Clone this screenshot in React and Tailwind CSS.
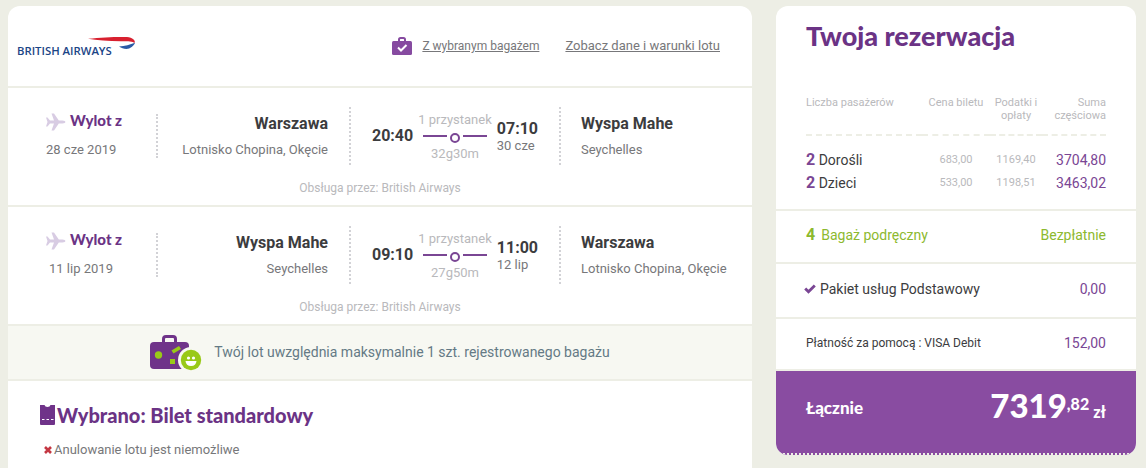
import React from "react";

const flights = [
  {
    date: "28 cze 2019",
    from: "Warszawa",
    fromAirport: "Lotnisko Chopina, Okęcie",
    departs: "20:40",
    duration: "32g30m",
    arrives: "07:10",
    arrivalDate: "30 cze",
    to: "Wyspa Mahe",
    toAirport: "Seychelles",
  },
  {
    date: "11 lip 2019",
    from: "Wyspa Mahe",
    fromAirport: "Seychelles",
    departs: "09:10",
    duration: "27g50m",
    arrives: "11:00",
    arrivalDate: "12 lip",
    to: "Warszawa",
    toAirport: "Lotnisko Chopina, Okęcie",
  },
];

const passengers = [
  { count: 2, label: "Dorośli", price: "683,00", tax: "1169,40", total: "3704,80" },
  { count: 2, label: "Dzieci", price: "533,00", tax: "1198,51", total: "3463,02" },
];

function AirlineLogo() {
  return (
    <svg width="120" height="22" viewBox="0 0 120 22" role="img" aria-label="British Airways">
      <text x="0" y="20" fontSize="11.3" fontWeight="600" fill="#1b4586" fontFamily="'Open Sans', sans-serif">
        BRITISH AIRWAYS
      </text>
      <path d="M71 3.800 C85 2.200 101 1.700 110 2 C115.500 2.500 119 5.500 117.500 8 C115.500 6.200 112 6.200 104 6.200 C91 6.200 80 5.500 71 3.800Z" fill="#d8202f" />
      <path d="M102 11.500 C108 11 113 9.800 118 7.800 C117 11 113 14 109.500 14 C106.500 14 104.500 13 102 11.500Z" fill="#2c5aa5" />
    </svg>
  );
}

function BagCheckIcon() {
  return (
    <svg width="20" height="18" viewBox="0 0 20 18" aria-hidden="true">
      <path d="M7 5V2.500Q7 1 8.500 1H11.500Q13 1 13 2.500V5" fill="none" stroke="#864aa0" strokeWidth="2" />
      <rect y="4" width="20" height="14" rx="1.500" fill="#864aa0" />
      <path d="M6 10.500L9 13.500L14.500 8" fill="none" stroke="#fff" strokeWidth="2" />
    </svg>
  );
}

function PlaneIcon() {
  return (
    <svg width="20" height="18" viewBox="0 0 20 18" aria-hidden="true" className="shrink-0">
      <path
        d="M0 4.500H1.500L4 7.500H8L5.500 .5H8L12.800 7.500H16.500Q19.500 7.800 19.500 9T16.500 10.500H12.800L8 17.500H5.500L8 10.500H4L1.500 13.500H0L1.500 9Z"
        fill="#d8cce3"
      />
    </svg>
  );
}

function StopoverLine() {
  return (
    <svg width="64" height="18" viewBox="0 0 64 18" aria-hidden="true">
      <path d="M0 8H24M40 8H64" stroke="#7a4694" strokeWidth="2" />
      <circle cx="32" cy="10" r="4" fill="none" stroke="#7a4694" strokeWidth="2" />
    </svg>
  );
}

function SuitcaseIcon() {
  return (
    <svg width="52" height="36" viewBox="0 0 52 36" aria-hidden="true">
      <path d="M13.500 8V4Q13.500 1.500 16 1.500H23Q25.500 1.500 25.500 4V8" fill="none" stroke="#6f3389" strokeWidth="3" />
      <rect y="7" width="39" height="27" rx="4" fill="#6f3389" />
      <circle cx="8.500" cy="20" r="3.700" fill="#99c918" />
      <path d="M21.500 15.500L29 11L31 14L23.500 18.500Z" fill="#99c918" />
      <rect x="20" y="24" width="5" height="5" fill="#99c918" />
      <circle cx="41" cy="25" r="13" fill="#f7f8f2" />
      <circle cx="41" cy="25" r="10.200" fill="#99c918" />
      <circle cx="38.500" cy="23" r="1.600" fill="#fff" />
      <circle cx="43.500" cy="23" r="1.600" fill="#fff" />
      <path d="M35.500 26H46.500Q46 31 41 31T35.500 26Z" fill="#fff" />
    </svg>
  );
}

function TicketIcon() {
  return (
    <svg width="15" height="20" viewBox="0 0 15 20" aria-hidden="true">
      <path d="M0 0H4.500Q5 2 7.500 2T10.500 0H15V19Q15 20 14 20H1Q0 20 0 19Z" fill="#6f3389" />
      <path d="M2 14.500H14" stroke="#fff" strokeWidth="1" strokeDasharray="2.500 2" />
    </svg>
  );
}

function Flight({ flight }) {
  return (
    <section className="border-b-2 border-[#edeee5] pt-[19px] pb-[9px]">
      <div className="grid h-[58px] grid-cols-[150fr_193fr_210fr_191fr] items-center whitespace-nowrap">
        <div className="flex flex-col gap-3 border-r-2 border-dotted border-[#d2d2d6] pl-[38px]">
          <h3 className="flex h-4 items-center gap-1 font-['Lato'] text-[15px] leading-3 font-black text-[#6b3385]">
            <PlaneIcon />
            <span className="pb-1">Wylot z</span>
          </h3>
          <p className="w-[70px] text-center leading-4">{flight.date}</p>
        </div>
        <div className="flex h-full flex-col gap-2 border-r-2 border-dotted border-[#d2d2d6] pt-[7px] pr-[21px] text-right">
          <strong className="text-base leading-5 font-bold text-[#3c3c3e]">{flight.from}</strong>
          <span className="leading-4">{flight.fromAirport}</span>
        </div>
        <div className="flex h-full items-center justify-center gap-[5px] border-r-2 border-dotted border-[#d2d2d6]">
          <strong className="text-base leading-5 font-bold text-[#3c3c3e]">{flight.departs}</strong>
          <div className="flex flex-col items-center pt-0.5 text-[#b9b9bc]">
            <span className="leading-4">1 przystanek</span>
            <StopoverLine />
            <span className="leading-4">{flight.duration}</span>
          </div>
          <div className="flex flex-col pt-0.5">
            <strong className="text-base leading-[18px] font-bold text-[#3c3c3e]">{flight.arrives}</strong>
            <span className="leading-4">{flight.arrivalDate}</span>
          </div>
        </div>
        <div className="flex h-full flex-col gap-2 pt-[7px] pl-5">
          <strong className="text-base leading-5 font-bold text-[#3c3c3e]">{flight.to}</strong>
          <span className="leading-4">{flight.toAirport}</span>
        </div>
      </div>
      <p className="mt-[15px] text-center text-[12px] leading-4 text-[#b9b9bc]">Obsługa przez: British Airways</p>
    </section>
  );
}

export default function App() {
  return (
    <div className="flex min-h-screen items-start gap-6 bg-[#edeee5] pt-1.5 pr-2.5 pl-2 font-['Roboto'] text-[13px] text-[#77777a]">
      <main className="min-h-[calc(100vh-6px)] min-w-0 flex-1 rounded-t-xl bg-white">
        <header className="flex h-[82px] items-center justify-between border-b-2 border-[#edeee5] pr-8 pl-[9px]">
          <AirlineLogo />
          <nav className="flex items-center gap-[26px]">
            <a href="#bagaz" className="flex items-center gap-2.5 text-xs underline">
              <BagCheckIcon />
              Z wybranym bagażem
            </a>
            <a href="#warunki" className="underline">
              Zobacz dane i warunki lotu
            </a>
          </nav>
        </header>

        {flights.map((flight) => (
          <Flight key={flight.date} flight={flight} />
        ))}

        <div className="flex h-[55px] items-center justify-center gap-3 border-b-2 border-[#edeee5] bg-[#f7f8f2] text-sm text-[#647a85]">
          <SuitcaseIcon />
          <p className="pb-0.5">Twój lot uwzględnia maksymalnie 1 szt. rejestrowanego bagażu</p>
        </div>

        <section className="px-8 pt-[22px]">
          <h2 className="flex items-center gap-0.5 font-['Lato'] text-xl leading-6 font-black text-[#6b3385]">
            <TicketIcon />
            Wybrano: Bilet standardowy
          </h2>
          <p className="mt-[15px] flex items-center gap-0.5 pl-1 leading-4">
            <svg width="8" height="8" viewBox="0 0 8 8" aria-hidden="true">
              <path d="M1 1L7 7M7 1L1 7" stroke="#c43742" strokeWidth="2.600" />
            </svg>
            Anulowanie lotu jest niemożliwe
          </p>
        </section>
      </main>

      <aside className="w-[360px] shrink-0 overflow-hidden rounded-xl bg-white">
        <section className="border-b-2 border-[#edeee5] px-[30px] pt-3.5 pb-[15px]">
          <h1 className="font-['Lato'] text-[27px] leading-8 font-black text-[#6b3385]">Twoja rezerwacja</h1>
          <table className="mt-11 w-full table-fixed border-collapse">
            <colgroup>
              <col className="w-[116px]" />
              <col className="w-[68px]" />
              <col className="w-[52px]" />
              <col />
            </colgroup>
            <thead className="text-[11px] leading-[13px] text-[#b9b9bc]">
              <tr className="border-b-2 border-dashed border-[#edeee5] align-top">
                <th className="pb-3 text-left font-normal">Liczba pasażerów</th>
                <th className="pb-3 text-center font-normal whitespace-nowrap">Cena biletu</th>
                <th className="pb-3 text-center font-normal">Podatki i opłaty</th>
                <th className="pb-3 text-right font-normal">
                  Suma
                  <br />
                  częściowa
                </th>
              </tr>
              <tr aria-hidden="true">
                <td className="h-[13px]" colSpan={4} />
              </tr>
            </thead>
            <tbody>
              {passengers.map((row) => (
                <tr key={row.label} className="h-[23px]">
                  <th className="text-left text-sm leading-5 font-normal text-[#3c3c3e]">
                    <b className="text-base leading-5 text-[#7a4694]">{row.count}</b> {row.label}
                  </th>
                  <td className="text-center text-[11px] leading-5 text-[#b9b9bc]">{row.price}</td>
                  <td className="text-center text-[11px] leading-5 text-[#b9b9bc]">{row.tax}</td>
                  <td className="text-right text-sm leading-5 text-[#7a4694]">{row.total}</td>
                </tr>
              ))}
            </tbody>
          </table>
        </section>

        <div className="flex h-[53px] items-center justify-between border-b-2 border-[#edeee5] px-[30px] pb-[3px] text-sm text-[#8db92e]">
          <span className="flex items-baseline gap-1.5">
            <b className="text-base">4</b>
            Bagaż podręczny
          </span>
          <span>Bezpłatnie</span>
        </div>
        <div className="flex h-[55px] items-center justify-between border-b-2 border-[#edeee5] pr-[30px] pb-[3px] pl-7 text-sm">
          <span className="flex items-center gap-1 text-[#3c3c3e]">
            <svg width="12" height="10" viewBox="0 0 12 10" aria-hidden="true">
              <path d="M1.200 4.500L4.500 7.800L10.800 1.500" fill="none" stroke="#7a4694" strokeWidth="2.800" />
            </svg>
            Pakiet usług Podstawowy
          </span>
          <span className="text-[#7a4694]">0,00</span>
        </div>
        <div className="flex h-[52px] items-center justify-between border-b-2 border-[#edeee5] px-[30px] pb-[3px]">
          <span className="text-xs text-[#3c3c3e]">Płatność za pomocą : VISA Debit</span>
          <span className="text-sm text-[#7a4694]">152,00</span>
        </div>
        <div className="flex h-[84px] items-center justify-between border-b-2 border-dotted border-[#edeee5] bg-[#894ca1] px-[30px] pb-2 font-['Lato'] font-black text-white">
          <span className="text-[17px]">Łącznie</span>
          <span className="flex items-baseline pb-1.5">
            <span className="text-[33px] leading-10">7319</span>
            <sup className="text-base">,82</sup>
            <span className="ml-1 text-base">zł</span>
          </span>
        </div>
      </aside>
    </div>
  );
}
